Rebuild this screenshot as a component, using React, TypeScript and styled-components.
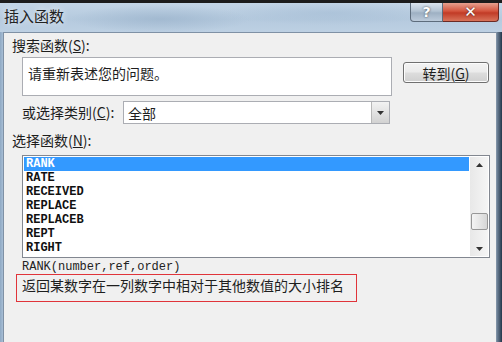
import styled, { createGlobalStyle } from "styled-components";

const GlobalStyle = createGlobalStyle`
  html, body {
    margin: 0;
    padding: 0;
    overflow: hidden;
    background: #ffffff;
  }
  * { box-sizing: border-box; }
`;

const CJK = `"Noto Sans CJK SC", "Noto Sans", sans-serif`;
const MONO = `"Liberation Mono", "DejaVu Sans Mono", monospace`;

const Window = styled.div`
  width: 502px;
  height: 342px;
  display: flex;
  flex-direction: column;
  background: linear-gradient(90deg, #8fa9c4 0%, #b7cbe0 1%, #b9cde2 98%, #6f8398 99%, #24364a 100%);
  font-family: ${CJK};
  color: #1e1e1e;
  overflow: hidden;
`;

const TitleBar = styled.div`
  height: 32px;
  flex-shrink: 0;
  display: flex;
  justify-content: space-between;
  align-items: flex-start;
  border-top: 3px solid #1c1c1c;
  background:
    radial-gradient(ellipse 90px 14px at 160px 16px, rgba(150, 175, 200, 0.6), transparent),
    radial-gradient(ellipse 110px 12px at 330px 10px, rgba(160, 185, 210, 0.5), transparent),
    linear-gradient(180deg, #c3d5e6 0%, #b5cade 55%, #bdd0e3 100%);
`;

const Title = styled.div`
  font-size: 15px;
  line-height: 20px;
  padding: 3px 0 0 4px;
  color: #222;
  text-shadow: 0 0 6px rgba(255, 255, 255, 0.9);
`;

const Controls = styled.div`
  display: flex;
  margin-right: 3px;
`;

const CaptionButton = styled.div<{ $close?: boolean }>`
  width: ${(p) => (p.$close ? 56 : 33)}px;
  height: 19px;
  display: flex;
  align-items: center;
  justify-content: center;
  border: 1px solid ${(p) => (p.$close ? "#6b2a24" : "#5d6c7c")};
  border-top: none;
  border-left: ${(p) => (p.$close ? "none" : undefined)};
  border-radius: ${(p) => (p.$close ? "0 0 4px 0" : "0 0 0 4px")};
  background: ${(p) =>
    p.$close
      ? "linear-gradient(180deg, #e6a08e 0%, #d4553e 45%, #c13b26 55%, #d8735a 100%)"
      : "linear-gradient(180deg, #dbe4ee 0%, #b3c3d3 45%, #9eb0c3 55%, #bccbdb 100%)"};
  color: #fff;
  font-family: "DejaVu Sans", sans-serif;
  font-weight: bold;
  font-size: ${(p) => (p.$close ? 15 : 14)}px;
  text-shadow: 0 0 2px rgba(40, 40, 40, 0.9);
`;

const Client = styled.div`
  flex: 1;
  margin: 0 5px 0 3px;
  background: #f0f0f0;
  border: 1px solid #7f91a5;
  border-bottom: none;
  padding: 4px 7px 0 8px;
  display: flex;
  flex-direction: column;
  font-size: 14px;
`;

const Label = styled.div<{ $top?: number }>`
  line-height: 16px;
  height: 16px;
  margin-top: ${(p) => p.$top ?? 0}px;
  white-space: nowrap;
`;

const Key = styled.span`
  text-decoration: underline;
`;

const Row = styled.div<{ $top: number }>`
  display: flex;
  align-items: flex-start;
  margin-top: ${(p) => p.$top}px;
  padding-left: 10px;
`;

const SearchBox = styled.div`
  width: 370px;
  height: 39px;
  background: #fff;
  border: 1px solid #abadb3;
  padding: 6px 5px;
  font-size: 14px;
  line-height: 18px;
`;

const GoButton = styled.div`
  margin: 5px 0 0 11px;
  width: 86px;
  height: 21px;
  border: 1px solid #707070;
  border-radius: 3px;
  background: linear-gradient(180deg, #f3f3f3 0%, #ebebeb 48%, #dddddd 52%, #cfcfcf 100%);
  box-shadow: inset 0 0 0 1px #fcfcfc;
  display: flex;
  align-items: center;
  justify-content: center;
  font-size: 14px;
  line-height: 18px;
`;

const CategoryLabel = styled.div`
  width: 101px;
  line-height: 23px;
  white-space: nowrap;
`;

const Combo = styled.div`
  width: 267px;
  height: 23px;
  background: #fff;
  border: 1px solid #abadb3;
  display: flex;
  align-items: center;
  justify-content: space-between;
  padding-left: 4px;
  font-size: 14px;
`;

const DropButton = styled.div`
  width: 18px;
  height: 21px;
  border-left: 1px solid #b8b8b8;
  background: linear-gradient(180deg, #f2f2f2 0%, #e2e2e2 50%, #d2d2d2 100%);
  display: flex;
  align-items: center;
  justify-content: center;
`;

const ListBox = styled.div`
  margin: 7px 0 0 10px;
  width: 468px;
  height: 103px;
  background: #fff;
  border: 1px solid #828790;
  padding: 1px;
  display: flex;
`;

const Items = styled.div`
  flex: 1;
  display: flex;
  flex-direction: column;
`;

const Item = styled.div<{ $selected?: boolean }>`
  height: 14px;
  line-height: 14px;
  padding-left: 2px;
  font-family: ${MONO};
  font-weight: bold;
  font-size: 12px;
  color: ${(p) => (p.$selected ? "#ffffff" : "#111")};
  background: ${(p) => (p.$selected ? "#3399ff" : "transparent")};
`;

const ScrollBar = styled.div`
  width: 18px;
  margin-left: 1px;
  background: linear-gradient(90deg, #e8e8e8, #f5f5f5);
  display: flex;
  flex-direction: column;
  align-items: center;
  justify-content: space-between;
  padding: 6px 0 5px;
`;

const Thumb = styled.div`
  width: 17px;
  height: 17px;
  border: 1px solid #979797;
  border-radius: 2px;
  background: linear-gradient(90deg, #f4f4f4 0%, #e6e6e6 50%, #d6d6d6 100%);
  margin-top: 28px;
`;

const Syntax = styled.div`
  margin: 2px 0 0 10px;
  height: 14px;
  line-height: 14px;
  font-family: ${MONO};
  font-size: 12px;
  color: #222;
`;

const Description = styled.div`
  margin-left: 4px;
  width: 341px;
  height: 28px;
  border: 1px solid #e0343a;
  padding-left: 5px;
  font-size: 14px;
  line-height: 20px;
  white-space: nowrap;
`;

const Arrow = ({ up }: { up?: boolean }) => (
  <svg width="7" height="4" viewBox="0 0 7 4">
    <path d={up ? "M0 4 L3.5 0 L7 4 Z" : "M0 0 L7 0 L3.5 4 Z"} fill="#333" />
  </svg>
);

const functions = ["RANK", "RATE", "RECEIVED", "REPLACE", "REPLACEB", "REPT", "RIGHT"];

export default function App() {
  return (
    <>
      <GlobalStyle />
      <Window>
        <TitleBar>
          <Title>插入函数</Title>
          <Controls>
            <CaptionButton>?</CaptionButton>
            <CaptionButton $close>✕</CaptionButton>
          </Controls>
        </TitleBar>
        <Client>
          <Label>
            搜索函数(<Key>S</Key>):
          </Label>
          <Row $top={4}>
            <SearchBox>请重新表述您的问题。</SearchBox>
            <GoButton>
              转到(<Key>G</Key>)
            </GoButton>
          </Row>
          <Row $top={5}>
            <CategoryLabel>
              或选择类别(<Key>C</Key>):
            </CategoryLabel>
            <Combo>
              <span>全部</span>
              <DropButton>
                <Arrow />
              </DropButton>
            </Combo>
          </Row>
          <Label $top={8}>
            选择函数(<Key>N</Key>):
          </Label>
          <ListBox>
            <Items>
              {functions.map((f, i) => (
                <Item key={f} $selected={i === 0}>
                  {f}
                </Item>
              ))}
            </Items>
            <ScrollBar>
              <Arrow up />
              <Thumb />
              <Arrow />
            </ScrollBar>
          </ListBox>
          <Syntax>RANK(number,ref,order)</Syntax>
          <Description>返回某数字在一列数字中相对于其他数值的大小排名</Description>
        </Client>
      </Window>
    </>
  );
}
